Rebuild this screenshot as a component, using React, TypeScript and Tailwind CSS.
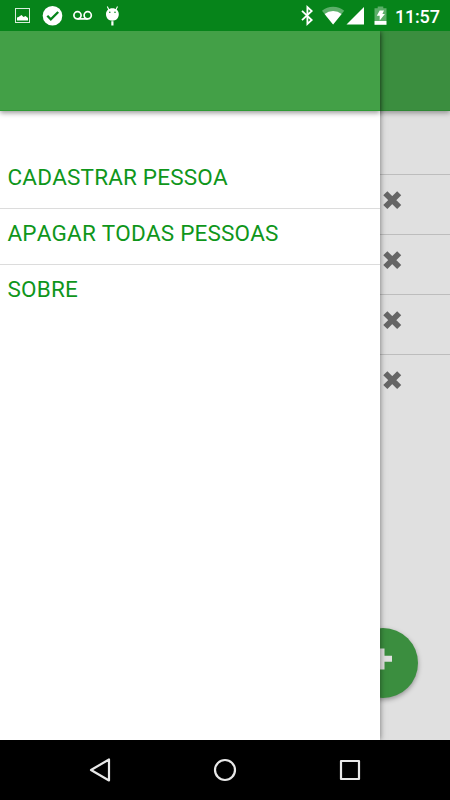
const menuItems = ['CADASTRAR PESSOA', 'APAGAR TODAS PESSOAS', 'SOBRE'];
const people = [1, 2, 3, 4];

function StatusBar() {
  return (
    <div className="relative z-30 flex h-[31px] items-center bg-[#06841a] text-white">
      <svg className="h-[31px] w-[130px]" viewBox="0 0 130 31" fill="none">
        {/* Picture */}
        <rect x="15.5" y="8.5" width="14" height="14" stroke="currentColor" strokeOpacity="0.85" />
        <path d="M17 20.5v-3l1.5-0.5 3-2 2 2 2-1 2.5 2v2.5z" fill="currentColor" />
        {/* Check */}
        <circle cx="52.5" cy="15.7" r="9.8" fill="currentColor" />
        <path d="M47.3 15.8l3.5 3.6 7.4-7.4" stroke="#06841a" strokeWidth="2.3" />
        {/* Voicemail */}
        <circle cx="77.5" cy="15.3" r="3.6" stroke="currentColor" strokeWidth="1.7" />
        <circle cx="87.7" cy="15.3" r="3.6" stroke="currentColor" strokeWidth="1.7" />
        <path d="M77.5 18.9h10.2" stroke="currentColor" strokeWidth="1.7" />
        {/* Android debug */}
        <path d="M107.3 6.5l1.8 3.7M117.5 6.5l-1.8 3.7" stroke="currentColor" strokeWidth="1.1" />
        <path d="M106 14.2c0-3.6 2.7-5.9 6.4-5.9s6.4 2.3 6.4 5.9c0 3.7-2.7 6.5-6.4 6.5s-6.4-2.8-6.4-6.5z" fill="currentColor" />
        <path d="M112.4 21.2v4.3" stroke="currentColor" strokeWidth="2.2" />
        <circle cx="109.8" cy="12.3" r="0.8" fill="#06841a" />
        <circle cx="115" cy="12.3" r="0.8" fill="#06841a" />
      </svg>
      <svg className="ml-auto h-[31px] w-[95px]" viewBox="295 0 95 31" fill="none">
        {/* Bluetooth */}
        <path d="M302 10.8l9.7 9.2-4.3 4V7l4.3 4-9.7 9.2" stroke="currentColor" strokeWidth="1.8" />
        {/* Wifi */}
        <path d="M322 10.8a17.3 17.3 0 0 1 22.2 0L333.1 24.5z" fill="currentColor" fillOpacity="0.35" />
        <path d="M324.6 14a13.5 13.5 0 0 1 17 0L333.1 24.5z" fill="currentColor" />
        {/* Signal */}
        <path d="M364 7v17.6h-17.5z" fill="currentColor" />
        {/* Battery */}
        <path d="M374.5 8.2h3.2V6.5h5.6v1.7h3.2V21h-12z" fill="currentColor" fillOpacity="0.35" />
        <path d="M374.5 21h12v3.8h-12z" fill="currentColor" />
        <path d="M379.7 10.5h4.3l-1.6 3.6h2.5l-5.2 6.4v-4.8h-2.9z" fill="currentColor" />
      </svg>
      <span className="mr-2.5 ml-[5px] w-[45px] pt-[3px] text-[18px] leading-none font-medium tracking-[-0.2px] whitespace-nowrap">11:57</span>
    </div>
  );
}

function RemoveIcon() {
  return (
    <svg className="h-5 w-5" viewBox="0 0 20 20" fill="none">
      <path d="M2.3 3.2l13.9 13.8M16.2 3.2l-13.9 13.8" stroke="#666" strokeWidth="5.8" />
    </svg>
  );
}

function PeopleList() {
  return (
    <div className="flex h-full flex-col bg-[#e0e0e0]">
      <div className="z-10 h-20 shrink-0 border-b border-[#2f8735] bg-[#3b8e3f] shadow-[0_2px_5px_rgba(0,0,0,0.35)]" />
      <div className="h-[63px] shrink-0" />
      <ul>
        {people.map((person) => (
          <li key={person} className="flex h-[60px] items-center justify-end border-t border-[#bdbdbd] pr-[47px] pb-[9px]">
            <button title="Apagar">
              <RemoveIcon />
            </button>
          </li>
        ))}
      </ul>
      <button
        title="Cadastrar"
        className="absolute right-[32.5px] bottom-[42.5px] h-[70px] w-[70px] rounded-full bg-[#3b8e3f] shadow-[0_2px_5px_rgba(0,0,0,0.35)]"
      >
        <svg className="h-full w-full" viewBox="0 0 70 70" fill="none">
          <path d="M33.5 20.5v21M23.5 30.8h20.5" stroke="#e0e0e0" strokeWidth="6" />
        </svg>
      </button>
    </div>
  );
}

function Drawer() {
  return (
    <aside className="absolute inset-y-0 left-0 z-20 w-[380px] bg-white shadow-[0_0_6px_rgba(0,0,0,0.5)]">
      <div className="h-20 border-b border-[#2f9a35] bg-[#43a047] shadow-[0_2px_5px_rgba(0,0,0,0.4)]" />
      <nav className="pt-[42px]">
        {menuItems.map((item) => (
          <a
            key={item}
            className="flex h-14 items-center border-b border-[#dcdcdc] px-[7.5px] pb-1.5 text-[22.5px] leading-none tracking-[0.18px] text-[#0f961b] [font-kerning:none] last:border-transparent"
          >
            {item}
          </a>
        ))}
      </nav>
    </aside>
  );
}

function NavigationBar() {
  return (
    <div className="relative z-30 flex h-[60px] items-center justify-center bg-black">
      <svg className="h-[60px] w-[300px]" viewBox="75 0 300 60" fill="none" stroke="#e8e8e8" strokeWidth="2.2" strokeLinejoin="round">
        <path d="M109 19.5v21l-18-10.5z" />
        <circle cx="225" cy="30" r="10" />
        <rect x="341" y="21" width="18" height="18" />
      </svg>
    </div>
  );
}

export default function App() {
  return (
    <div className="flex h-[800px] w-[450px] flex-col overflow-hidden font-[Roboto,sans-serif]">
      <StatusBar />
      <main className="relative flex-1 overflow-hidden">
        <PeopleList />
        <Drawer />
      </main>
      <NavigationBar />
    </div>
  );
}
